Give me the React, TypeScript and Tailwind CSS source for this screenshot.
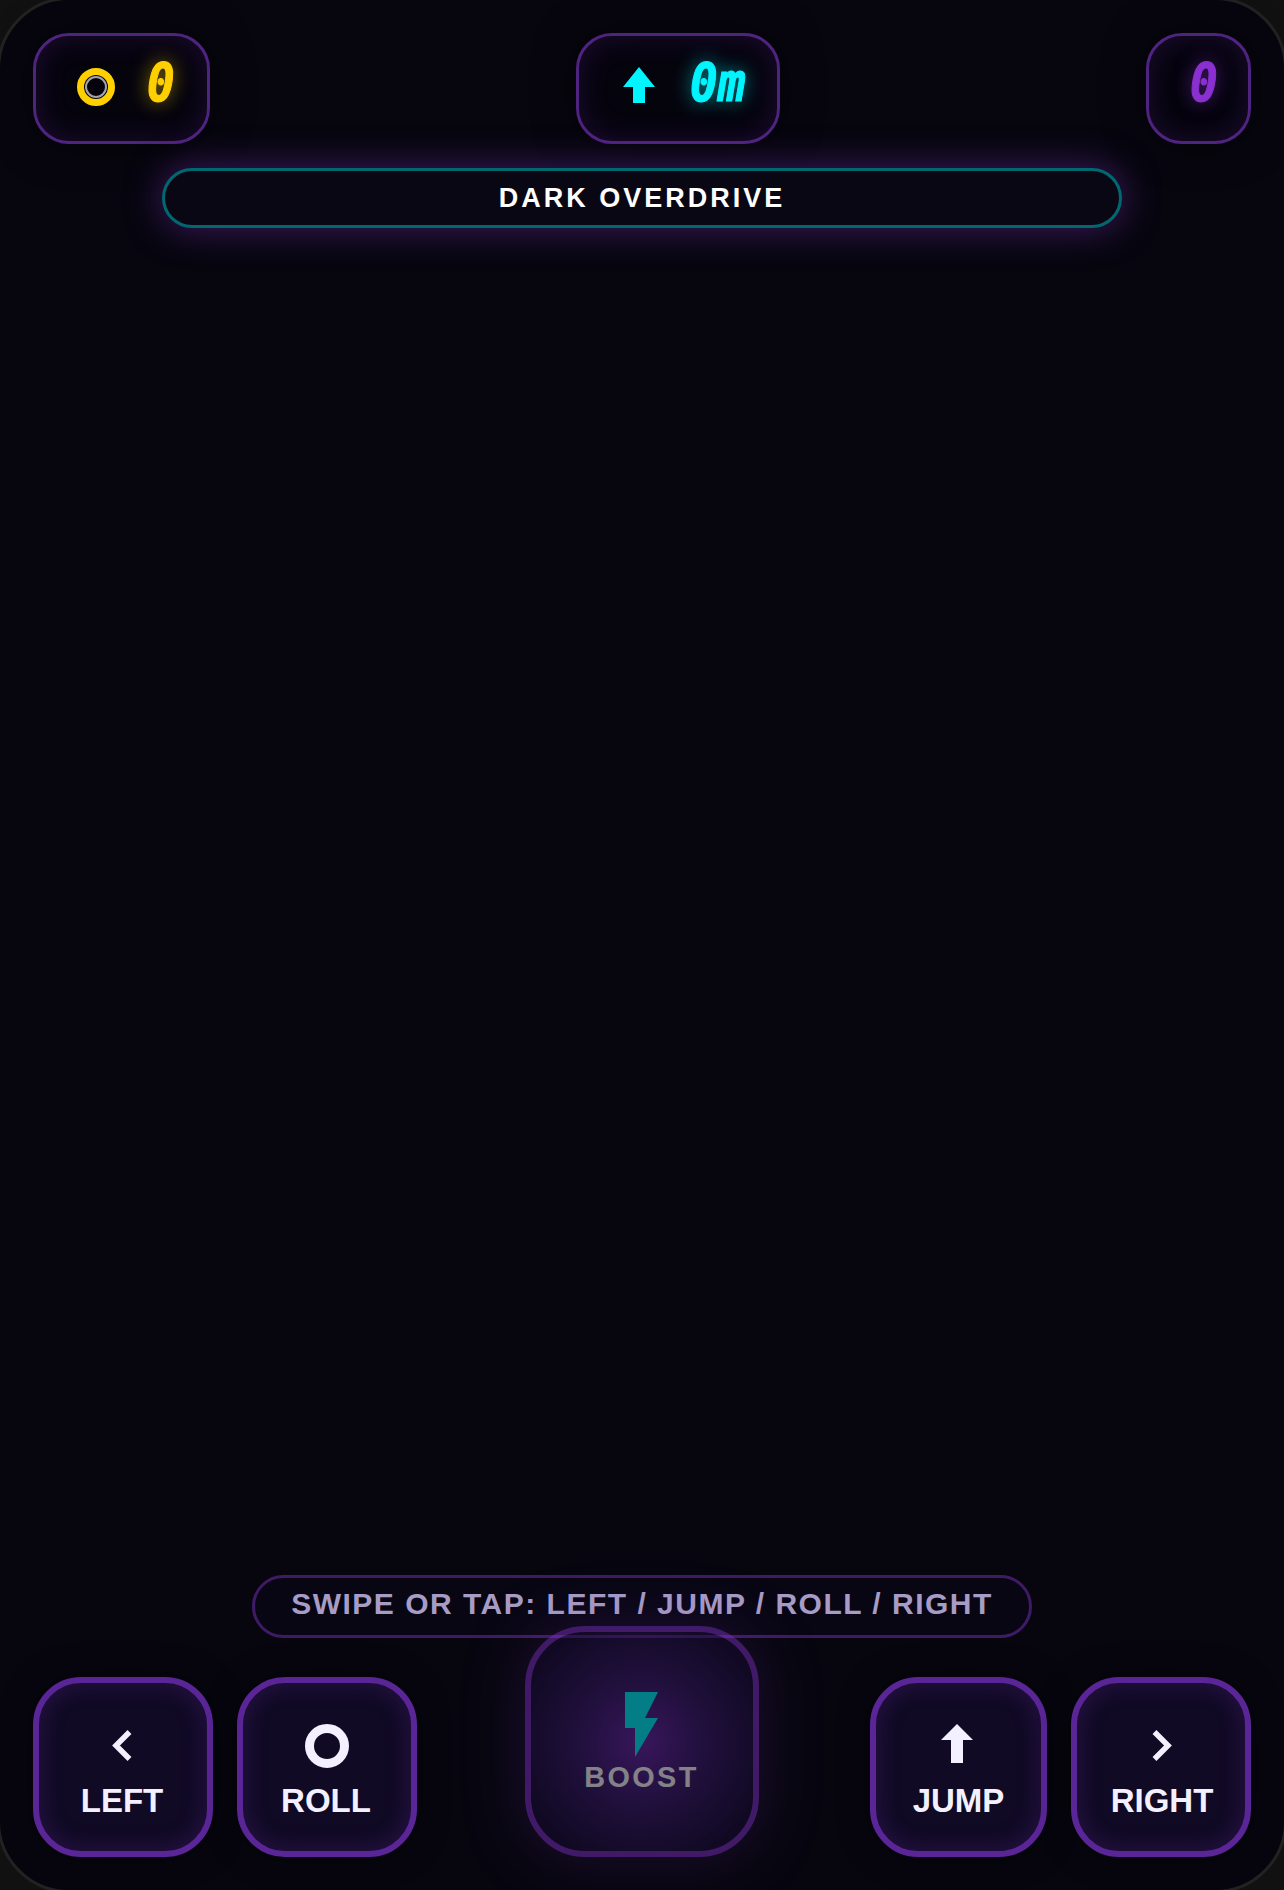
import type { ReactNode } from 'react'

const HUD_FONT = 'inline-block shrink-0 origin-center scale-y-[1.14] font-["DejaVu_Sans_Mono",monospace] text-[46px] leading-[50px] font-bold italic [-webkit-text-stroke:1px_currentColor]'

function HudBox({ children, className }: { children: ReactNode; className: string }) {
  return (
    <div className={`flex h-[111px] items-center gap-[24px] rounded-[36px] border-[3px] border-[#4f2380] bg-[#05040d] pb-[3px] pl-[36px] shadow-[inset_0_0_30px_rgba(123,47,190,0.2),0_0_40px_rgba(0,0,0,0.6)] ${className}`}>
      {children}
    </div>
  )
}

function ControlButton({ label, icon, width, labelClass }: { label: string; icon: ReactNode; width: string; labelClass?: string }) {
  return (
    <button className={`flex h-[180px] ${width} flex-col items-center justify-center rounded-[48px] border-[6px] border-[#5a2596] bg-[#100a24] pt-[10px] shadow-[inset_0_0_24px_rgba(123,47,190,0.25),0_0_30px_rgba(0,0,0,0.5)]`}>
      <span className="flex h-[44px] items-center justify-center">{icon}</span>
      <span className={`mt-[14px] text-[33px] leading-[38px] font-bold text-[#f3f0ff] ${labelClass ?? ''}`}>{label}</span>
    </button>
  )
}

function Chevron({ direction }: { direction: 'left' | 'right' }) {
  return (
    <svg className={direction === 'left' ? 'mr-[4px] mb-[2px]' : 'ml-[2px] mb-[2px]'} width="21" height="33" viewBox="0 0 21 33" fill="none" stroke="#f3f0ff" strokeWidth="5.5">
      <path d={direction === 'left' ? 'M18.5 3 L5 16.5 L18.5 30' : 'M2.5 3 L16 16.5 L2.5 30'} />
    </svg>
  )
}

function JumpArrow() {
  return (
    <svg className="mr-[3px] mb-[6px]" width="32" height="39" viewBox="0 0 32 39" fill="#f3f0ff">
      <path d="M16 0 L32 16 L22 16 L22 39 L10 39 L10 16 L0 16 Z" />
    </svg>
  )
}

function DistanceArrow() {
  return (
    <svg className="mb-[4px]" width="32" height="36" viewBox="0 0 32 36" fill="#00f5ff">
      <path d="M16 0 L32 20 L22 20 L22 36 L10 36 L10 20 L0 20 Z" />
    </svg>
  )
}

export default function App() {
  return (
    <div className="h-[1890px] w-[1284px] overflow-hidden bg-[#111111] font-['Liberation_Sans',sans-serif]">
      <div className="-m-[3px] flex h-[1896px] w-[1290px] flex-col rounded-[72px] border-[3px] border-[#222222] bg-[#07060f] px-[33px] pt-[33px] pb-[33px]">
        {/* HUD */}
        <div className="flex items-start justify-between">
          <HudBox className="w-[177px]">
            <span className="flex w-[48px] shrink-0 justify-center">
              <span className="flex h-[38px] w-[38px] shrink-0 items-center justify-center rounded-full border-[7px] border-[#ffd000] bg-[#05040d]">
                <span className="h-[22px] w-[22px] rounded-full border-[2px] border-[#a5a3ab]" />
              </span>
            </span>
            <span className={`${HUD_FONT} mb-[8px] ml-[3px] text-[#ffd000] [text-shadow:0_0_18px_rgba(255,208,0,0.6)]`}>0</span>
          </HudBox>
          <HudBox className="w-[204px]">
            <span className="flex w-[48px] shrink-0 justify-center">
              <DistanceArrow />
            </span>
            <span className={`${HUD_FONT} mb-[8px] ml-[3px] text-[#00f5ff] [text-shadow:0_0_18px_rgba(0,245,255,0.6)]`}>0m</span>
          </HudBox>
          <HudBox className="w-[105px]">
            <span className={`${HUD_FONT} mb-[8px] ml-[5px] text-[#8a2fd0] [text-shadow:0_0_18px_rgba(138,47,208,0.6)]`}>0</span>
          </HudBox>
        </div>

        {/* Title */}
        <div className="mx-auto mt-[24px] flex h-[60px] w-[960px] items-center justify-center rounded-full border-[3px] border-[#00696f] bg-[#0a0715] text-[27px] font-bold tracking-[3px] text-white shadow-[0_0_36px_rgba(123,47,190,0.5)]">
          DARK OVERDRIVE
        </div>

        <div className="flex-1" />

        {/* Hint */}
        <div className="mx-auto flex h-[63px] w-[780px] translate-y-[1px] items-center justify-center rounded-full border-[3px] border-[#3f1a66] bg-[#080613] pb-[6px] text-[30px] font-bold tracking-[1.5px] text-[#a79cc5]">
          SWIPE OR TAP: LEFT / JUMP / ROLL / RIGHT
        </div>

        {/* Controls */}
        <div className="-mt-[11px] flex items-end justify-between">
          <div className="flex gap-[24px]">
            <ControlButton label="LEFT" width="w-[180px]" labelClass="mr-[2px]" icon={<Chevron direction="left" />} />
            <ControlButton label="ROLL" width="w-[180px]" labelClass="mr-[2px]" icon={<span className="h-[44px] w-[44px] rounded-full border-[9px] border-[#f3f0ff]" />} />
          </div>
          <button className="mr-[4px] flex h-[231px] w-[234px] flex-col items-center justify-center rounded-[60px] border-[6px] border-[#7b2fbe] bg-[radial-gradient(circle,#6a27a8_0%,#3a1a6a_40%,#1c0d3a_80%)] pt-[2px] opacity-50 shadow-[0_0_60px_rgba(123,47,190,0.4)]">
            <svg width="33" height="65" viewBox="0 0 33 65" fill="#00f5ff">
              <path d="M0 0 L33 0 L20 26 L33 26 L10 65 L10 36 L0 36 Z" />
            </svg>
            <span className="mt-[4px] text-[28.8px] leading-[32px] font-bold tracking-[2.4px] text-white">BOOST</span>
          </button>
          <div className="flex gap-[24px]">
            <ControlButton label="JUMP" width="w-[177px]" icon={<JumpArrow />} />
            <ControlButton label="RIGHT" width="w-[180px]" labelClass="ml-[2px]" icon={<Chevron direction="right" />} />
          </div>
        </div>
      </div>
    </div>
  )
}
